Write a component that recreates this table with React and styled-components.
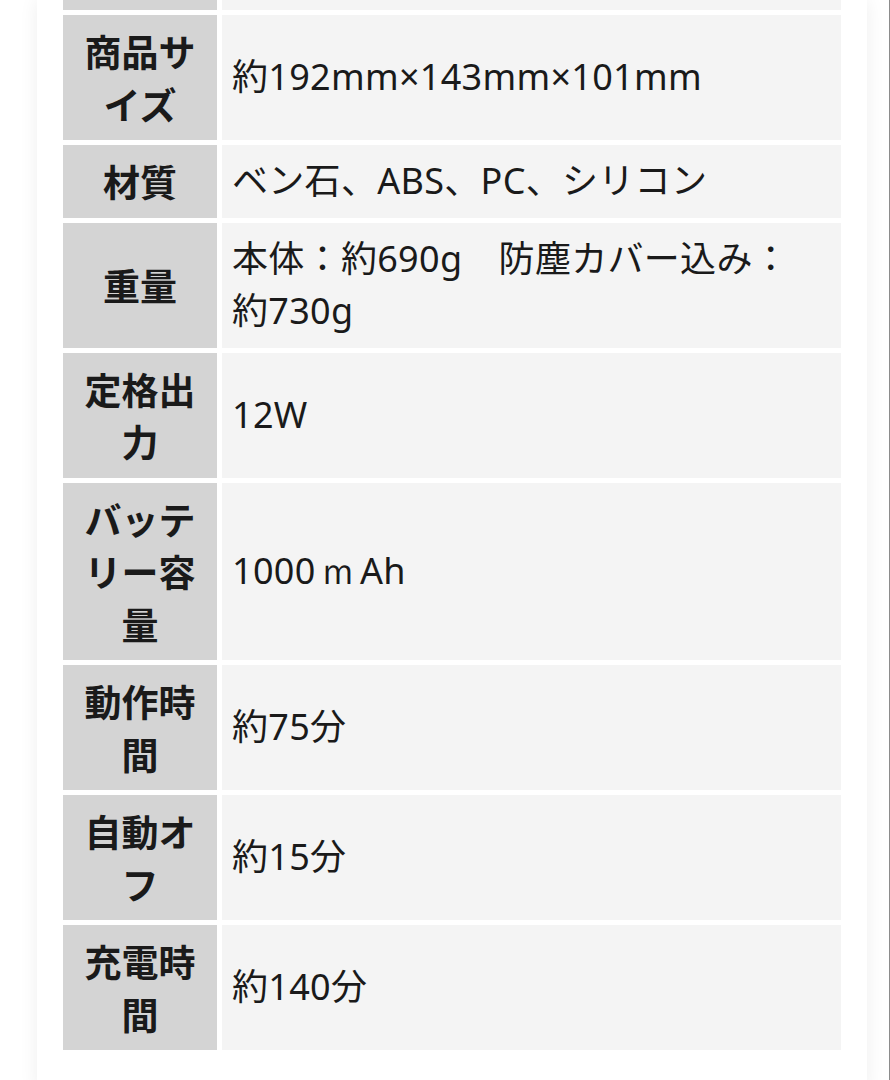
import React from "react";
import styled, { createGlobalStyle } from "styled-components";

const GlobalStyle = createGlobalStyle`
  html, body {
    margin: 0;
    padding: 0;
    background: #ffffff;
  }
  body {
    font-family: "Noto Sans", "Noto Sans CJK JP", sans-serif;
    color: #1c1c1c;
  }
`;

const Page = styled.div`
  display: flex;
  min-height: 1080px;
  padding: 0 22px 0 37px;
  border-right: 1px solid #8c8c8c;
  box-sizing: border-box;
  width: 890px;
  overflow: hidden;
`;

const Card = styled.div`
  flex: 1;
  background: #ffffff;
  box-shadow: 0 0 18px rgba(0, 0, 0, 0.07);
  padding: 0 26px 40px;
  min-height: 1080px;
  box-sizing: border-box;
`;

const SpecTable = styled.div`
  display: grid;
  grid-template-columns: 154px 1fr;
  gap: 5px;
`;

const HeadCell = styled.div`
  background: #d4d4d4;
  display: flex;
  align-items: center;
  justify-content: center;
  text-align: center;
  padding: ${(p) => (p.$stub ? "0" : "10px 8px")};
  height: ${(p) => (p.$stub ? "10px" : "auto")};
  font-family: "Noto Sans CJK JP", "Noto Sans", sans-serif;
  font-weight: 700;
  font-size: 37px;
  line-height: 52.5px;
  color: #1a1a1a;
  box-sizing: border-box;
`;

const ValueCell = styled.div`
  background: #f4f4f4;
  display: flex;
  align-items: center;
  padding: ${(p) => (p.$stub ? "0" : "10px 30px 10px 10px")};
  height: ${(p) => (p.$stub ? "10px" : "auto")};
  font-family: "Noto Sans", "Noto Sans CJK JP", sans-serif;
  font-weight: 400;
  font-size: 36px;
  letter-spacing: 0.3px;
  line-height: 52.5px;
  color: #1a1a1a;
  box-sizing: border-box;
`;

const WideChar = styled.span`
  font-family: "Noto Sans", sans-serif;
  margin: 0 4px;
`;

const rows = [
  ["商品サイズ", "約192mm×143mm×101mm"],
  ["材質", "ベン石、ABS、PC、シリコン"],
  ["重量", "本体：約690g　防塵カバー込み：約730g"],
  ["定格出力", "12W"],
  [
    "バッテリー容量",
    <>
      1000<WideChar>ｍ</WideChar>Ah
    </>,
  ],
  ["動作時間", "約75分"],
  ["自動オフ", "約15分"],
  ["充電時間", "約140分"],
];

export default function App() {
  return (
    <>
      <GlobalStyle />
      <Page>
        <Card>
          <SpecTable>
            <HeadCell $stub />
            <ValueCell $stub />
            {rows.map(([k, v]) => (
              <React.Fragment key={k}>
                <HeadCell>{k}</HeadCell>
                <ValueCell>
                  <span>{v}</span>
                </ValueCell>
              </React.Fragment>
            ))}
          </SpecTable>
        </Card>
      </Page>
    </>
  );
}
